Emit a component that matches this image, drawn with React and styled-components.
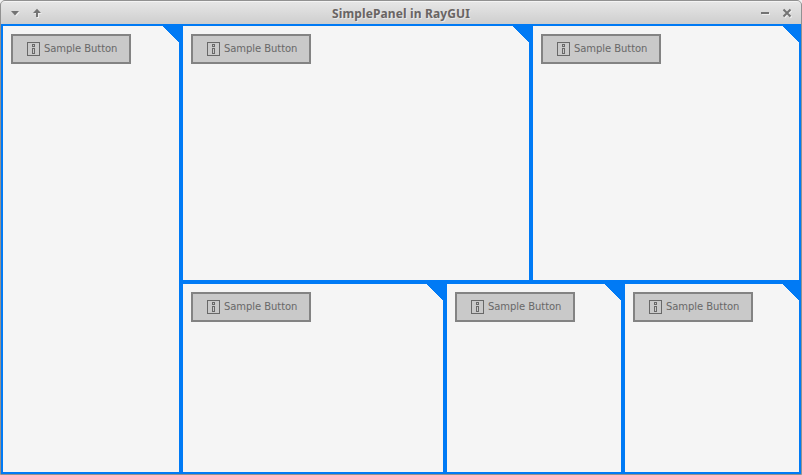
import React from 'react';
import styled, { createGlobalStyle } from 'styled-components';

const Global = createGlobalStyle`
  * { box-sizing: border-box; }
  body { margin: 0; background: #f2f2f2; overflow: hidden; }
`;

const Window = styled.div`
  width: 802px;
  height: 475px;
  display: flex;
  flex-direction: column;
  border: 1px solid #919191;
  border-radius: 5px 5px 0 0;
  background: #919191;
  overflow: hidden;
`;

const TitleBar = styled.header`
  flex: 0 0 23px;
  display: grid;
  grid-template-columns: 60px 1fr 60px;
  align-items: center;
  border-top: 1px solid #f4f4f4;
  background: linear-gradient(#e6e6e6, #cecece);
`;

const Title = styled.h1`
  margin: 0;
  padding-top: 1px;
  text-align: center;
  font: bold 12px/21px "Noto Sans", sans-serif;
  letter-spacing: 0.13px;
  color: #696463;
  text-shadow: 1px 1px 0 #e8e8e8;
  white-space: nowrap;
`;

const Controls = styled.div`
  display: flex;
  gap: 10px;
  justify-content: ${(p) => (p.$end ? 'flex-end' : 'flex-start')};
  padding: 0 8px;
`;

const Control = styled.button`
  display: flex;
  padding: 0;
  border: 0;
  background: none;
  color: #737373;
  filter: drop-shadow(1px 1px 0 #eee);
`;

const Client = styled.main`
  flex: 1;
  display: grid;
  grid-template-columns: 180px 1fr;
  background: #f5f5f5;
`;

const Rows = styled.div`
  display: grid;
  grid-template-rows: 258px 192px;
`;

const Row = styled.div`
  display: grid;
  grid-template-columns: ${(p) => p.$columns};
`;

const PanelBox = styled.section`
  position: relative;
  padding: 8px;
  border: 2px solid #007af5;
  background: #f5f5f5;
`;

const Corner = styled.svg`
  position: absolute;
  top: -2px;
  right: -2px;
  display: block;
`;

const PanelButton = styled.button`
  display: flex;
  align-items: center;
  width: 120px;
  height: 30px;
  padding: 0 0 0 14px;
  gap: 4px;
  border: 2px solid #838383;
  background: #c9c9c9;
  color: #686868;
`;

const Label = styled.span`
  font: 10px/14px "DejaVu Sans", sans-serif;
  letter-spacing: -0.06px;
  white-space: nowrap;
`;

function InfoIcon() {
  return (
    <svg width="13" height="14" viewBox="0 0 13 14" fill="none" stroke="currentColor" shapeRendering="crispEdges">
      <path d="M.5 .5h12v13H.5zM5.5 2.5h2v2h-2zM5.5 6.5h2v5h-2z" />
    </svg>
  );
}

function Panel() {
  return (
    <PanelBox>
      <Corner width="21" height="21" viewBox="0 0 21 21" shapeRendering="crispEdges">
        <path d="M0 0H21V21Z" fill="#007af5" />
      </Corner>
      <PanelButton>
        <InfoIcon />
        <Label>Sample Button</Label>
      </PanelButton>
    </PanelBox>
  );
}

function Glyph({ d, filled }) {
  return (
    <Control>
      <svg width="12" height="12" viewBox="0 0 12 12" fill={filled ? 'currentColor' : 'none'} stroke={filled ? 'none' : 'currentColor'} strokeWidth="2">
        <path d={d} />
      </svg>
    </Control>
  );
}

export default function App() {
  return (
    <>
      <Global />
      <Window>
        <TitleBar>
          <Controls>
            <Glyph filled d="M2 4H10L6 8.5Z" />
            <Glyph filled d="M6 1.8L10 6H7V10H5V6H2Z" />
          </Controls>
          <Title>SimplePanel in RayGUI</Title>
          <Controls $end>
            <Glyph d="M2 6H10" />
            <Glyph d="M2.5 2.5L9.5 9.5M9.5 2.5L2.5 9.5" />
          </Controls>
        </TitleBar>
        <Client>
          <Panel />
          <Rows>
            <Row $columns="350px 270px">
              <Panel />
              <Panel />
            </Row>
            <Row $columns="264px 178px 178px">
              <Panel />
              <Panel />
              <Panel />
            </Row>
          </Rows>
        </Client>
      </Window>
    </>
  );
}
